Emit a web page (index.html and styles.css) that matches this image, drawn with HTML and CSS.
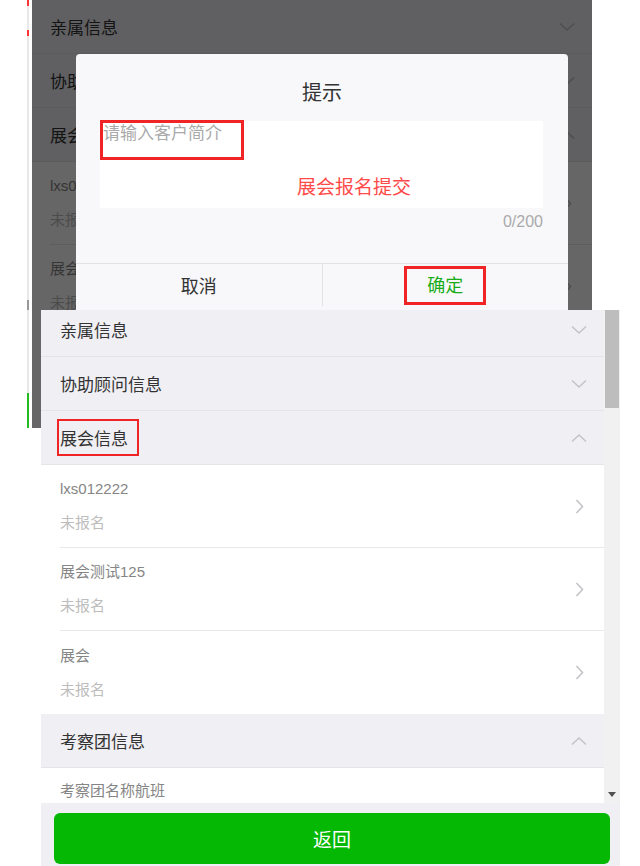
FILE: index.html
```html
<!DOCTYPE html>
<html lang="zh-CN">
<head>
  <meta charset="UTF-8">
  <meta name="viewport" content="width=device-width, initial-scale=1">
  <title>展会信息</title>
  <link rel="stylesheet" href="styles.css">
</head>
<body>

<div class="canvas">
  <div class="edge"></div>

  <!-- 截图一：提示弹窗 -->
  <section class="shot shot-top">
    <div class="list">
      <div class="group-head">
        <span>亲属信息</span>
        <svg class="chev" width="16" height="10" viewBox="0 0 16 10"><polyline points="1,1.5 8,8 15,1.5"/></svg>
      </div>
      <div class="group-head">
        <span>协助顾问信息</span>
        <svg class="chev" width="16" height="10" viewBox="0 0 16 10"><polyline points="1,1.5 8,8 15,1.5"/></svg>
      </div>
      <div class="group-head">
        <span>展会信息</span>
        <svg class="chev" width="16" height="10" viewBox="0 0 16 10"><polyline points="1,8.5 8,2 15,8.5"/></svg>
      </div>
      <div class="item">
        <div class="item-text">
          <div class="item-title">lxs012222</div>
          <div class="item-sub">未报名</div>
        </div>
        <svg class="arrow" width="9" height="15" viewBox="0 0 9 15"><polyline points="1.5,1 7.5,7.5 1.5,14"/></svg>
      </div>
      <div class="item">
        <div class="item-text">
          <div class="item-title">展会测试125</div>
          <div class="item-sub">未报名</div>
        </div>
        <svg class="arrow" width="9" height="15" viewBox="0 0 9 15"><polyline points="1.5,1 7.5,7.5 1.5,14"/></svg>
      </div>
    </div>

    <div class="mask"></div>

    <div class="dialog">
      <div class="dialog-title">提示</div>
      <div class="textarea">
        <span class="mark mark-placeholder">请输入客户简介</span>
        <span class="note">展会报名提交</span>
      </div>
      <div class="counter">0/200</div>
      <div class="dialog-btns">
        <div class="dialog-btn">取消</div>
        <div class="dialog-btn ok"><span class="mark mark-ok">确定</span></div>
      </div>
    </div>
  </section>

  <!-- 截图二：展会信息列表 -->
  <section class="shot shot-bottom">
    <div class="viewport">
      <div class="list scrolled">
        <div class="group-head">
          <span>亲属信息</span>
          <svg class="chev" width="16" height="10" viewBox="0 0 16 10"><polyline points="1,1.5 8,8 15,1.5"/></svg>
        </div>
        <div class="group-head">
          <span>协助顾问信息</span>
          <svg class="chev" width="16" height="10" viewBox="0 0 16 10"><polyline points="1,1.5 8,8 15,1.5"/></svg>
        </div>
        <div class="group-head">
          <span class="mark mark-head">展会信息</span>
          <svg class="chev" width="16" height="10" viewBox="0 0 16 10"><polyline points="1,8.5 8,2 15,8.5"/></svg>
        </div>
        <div class="item">
          <div class="item-text">
            <div class="item-title">lxs012222</div>
            <div class="item-sub">未报名</div>
          </div>
          <svg class="arrow" width="9" height="15" viewBox="0 0 9 15"><polyline points="1.5,1 7.5,7.5 1.5,14"/></svg>
        </div>
        <div class="item">
          <div class="item-text">
            <div class="item-title">展会测试125</div>
            <div class="item-sub">未报名</div>
          </div>
          <svg class="arrow" width="9" height="15" viewBox="0 0 9 15"><polyline points="1.5,1 7.5,7.5 1.5,14"/></svg>
        </div>
        <div class="item">
          <div class="item-text">
            <div class="item-title">展会</div>
            <div class="item-sub">未报名</div>
          </div>
          <svg class="arrow" width="9" height="15" viewBox="0 0 9 15"><polyline points="1.5,1 7.5,7.5 1.5,14"/></svg>
        </div>
        <div class="group-head">
          <span>考察团信息</span>
          <svg class="chev" width="16" height="10" viewBox="0 0 16 10"><polyline points="1,8.5 8,2 15,8.5"/></svg>
        </div>
        <div class="item item-cut">
          <div class="item-title">考察团名称航班</div>
        </div>
      </div>
      <div class="scrollbar">
        <div class="thumb"></div>
        <div class="scroll-down"></div>
      </div>
    </div>
    <div class="footer">
      <button class="back-btn">返回</button>
    </div>
  </section>
</div>

</body>
</html>
```

FILE: styles.css
```css
body {
  margin: 0;
  background: #fff;
  font-family: "Liberation Sans", "Noto Sans CJK SC", sans-serif;
}
.canvas {
  position: relative;
  width: 640px;
  height: 866px;
  overflow: hidden;
}
.edge {
  position: absolute;
  left: 27px;
  top: 0;
  width: 2px;
  height: 428px;
  background: linear-gradient(#f33 0 6px, #e8e8e8 6px 30px, #f33 30px 36px, #e8e8e8 36px 300px, #999 300px 310px, #e8e8e8 310px 393px, #2b2 393px);
}
.shot {
  position: absolute;
  overflow: hidden;
}
.shot-top {
  left: 32px;
  top: 0;
  width: 560px;
  height: 428px;
  background: #fff;
}
.shot-bottom {
  left: 41px;
  top: 310px;
  width: 579px;
  height: 556px;
  background: #fff;
  display: flex;
  flex-direction: column;
}

/* lista */
.group-head {
  height: 53px;
  background: #efeff4;
  border-bottom: 1px solid #e4e4e9;
  display: flex;
  align-items: center;
  justify-content: space-between;
  padding: 0 17px 0 18px;
  font-size: 17px;
  color: #333;
}
.chev polyline, .arrow polyline {
  fill: none;
  stroke: #c4c4c8;
  stroke-width: 1.6;
}
.item {
  height: 82px;
  margin-left: 18px;
  padding-right: 20px;
  border-bottom: 1px solid #e8e8e8;
  display: flex;
  align-items: center;
  justify-content: space-between;
  background: #fff;
}
.item:has(+ .group-head) {
  border-bottom: none;
  height: 83px;
}
.item-cut {
  align-items: flex-start;
  padding-top: 12px;
}
.item-text {
  display: flex;
  flex-direction: column;
  gap: 12px;
}
.item-title {
  font-size: 15px;
  line-height: 22px;
  color: #858585;
}
.item-sub {
  font-size: 15px;
  line-height: 22px;
  color: #bdbdbd;
}
.mask {
  position: absolute;
  inset: 0;
  background: rgba(0, 0, 0, 0.6);
}

/* 弹窗 */
.dialog {
  position: absolute;
  left: 44px;
  top: 54px;
  width: 492px;
  height: 320px;
  background: #f8f8fa;
  border-radius: 4px;
}
.dialog-title {
  margin-top: 25px;
  text-align: center;
  font-size: 20px;
  line-height: 28px;
  color: #333;
}
.textarea {
  position: relative;
  margin: 14px 25px 0 24px;
  height: 87px;
  background: #fff;
}
.mark {
  display: inline-block;
  border: 3px solid #f02424;
}
.mark-placeholder {
  margin-top: -1px;
  padding: 1px 19px 13px 0;
  font-size: 17px;
  line-height: 20px;
  color: #aaa;
}
.note {
  position: absolute;
  left: 197px;
  top: 55px;
  font-size: 19px;
  line-height: 24px;
  color: #ff4a4a;
}
.counter {
  margin: 4px 25px 0 0;
  text-align: right;
  font-size: 16px;
  line-height: 20px;
  color: #aaa;
}
.dialog-btns {
  margin-top: 31px;
  border-top: 1px solid #e2e2e2;
  display: flex;
}
.dialog-btn {
  flex: 1;
  height: 42px;
  display: flex;
  align-items: center;
  justify-content: center;
  font-size: 18px;
  color: #333;
}
.dialog-btn + .dialog-btn {
  border-left: 1px solid #e2e2e2;
}
.dialog-btn.ok {
  color: #19ad19;
}
.mark-ok {
  padding: 6px 20px 5px;
  line-height: 22px;
}
.mark-head {
  margin-left: -3px;
  padding: 4px 9px 4px 1px;
  border-width: 2.5px;
}

/* 截图二 */
.viewport {
  height: 493px;
  display: flex;
  overflow: hidden;
}
.viewport .list {
  flex: 1;
}
.scrolled {
  margin-top: -7px;
}
.shot-bottom .group-head {
  padding-left: 19px;
}
.shot-bottom .item {
  margin-left: 19px;
}
.scrollbar {
  width: 16px;
  background: #f1f1f1;
  position: relative;
}
.thumb {
  margin: 0 1px;
  height: 98px;
  background: #bdbdbd;
}
.scroll-down {
  position: absolute;
  left: 4px;
  bottom: 6px;
  width: 0;
  height: 0;
  border-left: 4px solid transparent;
  border-right: 4px solid transparent;
  border-top: 5px solid #505050;
}
.footer {
  flex: 1;
  background: #efeff4;
  padding: 10px 10px 0 13px;
}
.back-btn {
  width: 100%;
  height: 51px;
  border: none;
  border-radius: 6px;
  background: #04b804;
  color: #fff;
  font-family: inherit;
  font-size: 19px;
}
```
